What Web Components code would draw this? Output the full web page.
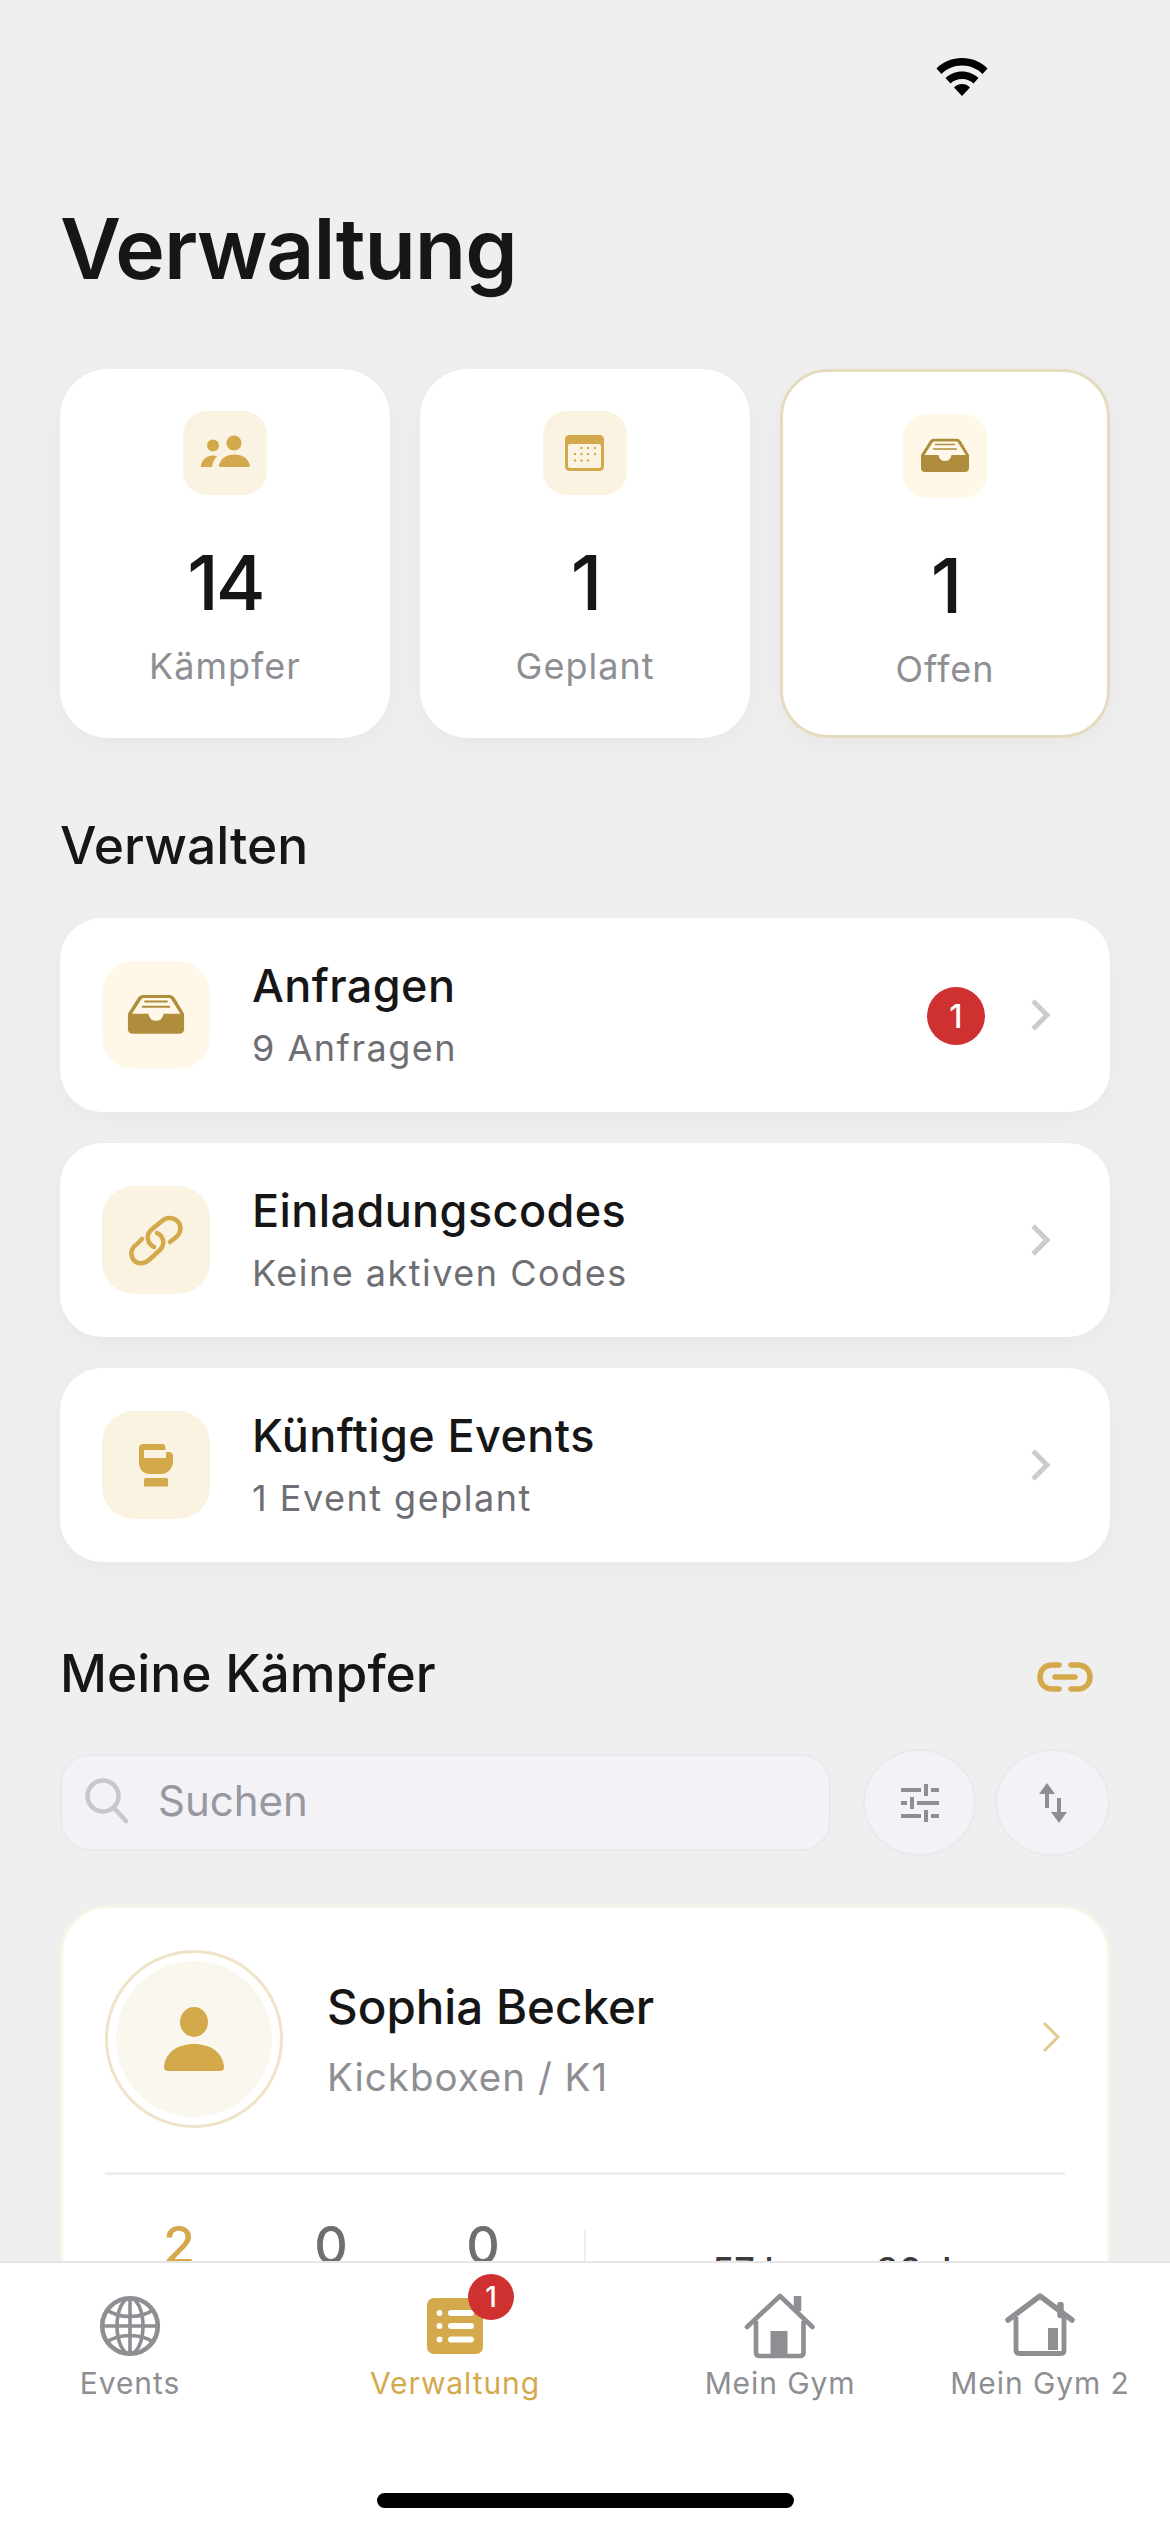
<!DOCTYPE html>
<html lang="de">
<head>
<meta charset="utf-8">
<title>Verwaltung</title>
<style>
    html, body { margin: 0; padding: 0; background: #efefef; }
    body { width: 1170px; height: 2532px; overflow: hidden; font-family: "Inter", "Liberation Sans", sans-serif; }
</style>
</head>
<body>
<app-shell>
    <status-top></status-top>
    <page-title>Verwaltung</page-title>
    <stat-row>
        <stat-card icon="people" value="14" label="Kämpfer"></stat-card>
        <stat-card icon="calendar" value="1" label="Geplant"></stat-card>
        <stat-card icon="inbox" value="1" label="Offen" highlighted></stat-card>
    </stat-row>
    <section-head>Verwalten</section-head>
    <manage-row icon="inbox" soft title="Anfragen" subtitle="9 Anfragen" badge="1"></manage-row>
    <manage-row icon="link" title="Einladungscodes" subtitle="Keine aktiven Codes"></manage-row>
    <manage-row icon="glove" title="Künftige Events" subtitle="1 Event geplant"></manage-row>
    <section-head linked>Meine Kämpfer</section-head>
    <search-bar placeholder="Suchen"></search-bar>
    <fighter-card name="Sophia Becker" discipline="Kickboxen / K1" wins="2" draws="0" losses="0" weight="57 kg" age="36 J"></fighter-card>
    <tab-bar slot="tabs">
        <tab-item icon="globe" label="Events"></tab-item>
        <tab-item icon="list" label="Verwaltung" active badge="1"></tab-item>
        <tab-item icon="house" label="Mein Gym"></tab-item>
        <tab-item icon="house2" label="Mein Gym 2"></tab-item>
    </tab-bar>
</app-shell>

<script>
const GOLD = '#d4a94c';
const DARK_GOLD = '#b08d3c';
const GREY = '#8e8e93';

const Icons = {
    people: `<svg width="84" height="84" viewBox="0 0 84 84" fill="${GOLD}">
        <circle cx="51" cy="32" r="7.6"/><circle cx="30" cy="34.5" r="6"/>
        <path d="M37 56c-1 0-1.400-.8-1.100-1.800C37.500 48 43 43.500 51.500 43.500S65.500 48 66.800 54.200c.2 1-.3 1.800-1.300 1.800z"/>
        <path d="M19 56c-1 0-1.300-.8-1-1.800C19.500 48 24 44.500 30 44.500c1.500 0 3 .2 4.200.7-2.400 2-4.500 5.500-5.200 10.800z"/>
    </svg>`,
    calendar: `<svg width="84" height="84" viewBox="0 0 84 84">
        <rect x="22" y="24" width="39" height="36" rx="4.500" fill="${GOLD}"/>
        <rect x="25" y="33" width="33" height="24" rx="2" fill="#fbf3e1"/>
        <g fill="${GOLD}">
            <circle cx="38.500" cy="37" r="1.200"/><circle cx="45" cy="37" r="1.200"/><circle cx="52" cy="37" r="1.200"/>
            <circle cx="32" cy="43" r="1.200"/><circle cx="38.500" cy="43" r="1.200"/><circle cx="45" cy="43" r="1.200"/><circle cx="52" cy="43" r="1.200"/>
            <circle cx="32" cy="49.500" r="1.200"/><circle cx="38.500" cy="49.500" r="1.200"/><circle cx="45" cy="49.500" r="1.200"/>
        </g>
    </svg>`,
    inbox: `<svg width="84" height="84" viewBox="0 0 84 84">
        <path d="M18 41 26.500 27.500C27.800 25.500 29 24.800 31 24.800H53.500C55.500 24.800 56.700 25.500 58 27.500L66 41V54C66 56.500 64.500 58 62 58H22C19.500 58 18 56.500 18 54Z" fill="${DARK_GOLD}"/>
        <path d="M21.500 41 29.200 29C29.800 28 30.500 27.500 31.500 27.500H53C54 27.500 54.700 28 55.300 29L62.800 41H48.500C47.800 45 45.500 47 42 47S36.200 45 35.500 41Z" fill="#fff8e8"/>
        <path d="M32 30.500H52M30 35H54" stroke="${DARK_GOLD}" stroke-width="1.600"/>
    </svg>`,
    link: `<svg width="108" height="108" viewBox="0 0 108 108" fill="none" stroke="${GOLD}" stroke-width="4.500" stroke-linecap="round">
        <path d="M52 61C46 58 43 50 49 44L60 35C66 30 74 32 77 37C80 42 78 49 73 52L68 56"/>
        <path d="M55 47C61 50 64 57 58 64L47 74C41 79 34 78 31 73C28 68 29 62 35 58L40 53"/>
    </svg>`,
    glove: `<svg width="108" height="108" viewBox="0 0 108 108">
        <path d="M41 33H60C62 33 63.500 34.500 63.500 36.500V41H67C69.500 41 71 42.500 71 45V50C71 57 66 63 59 63H48C41.500 63 37 58.500 37 52V37C37 34.500 38.500 33 41 33Z" fill="${GOLD}"/>
        <rect x="42" y="39" width="22" height="8" fill="#fbf3e1"/>
        <rect x="42" y="67" width="24" height="8.500" rx="1.500" fill="${GOLD}"/>
    </svg>`,
    globe: `<svg width="62" height="62" viewBox="0 0 62 62" fill="none" stroke="${GREY}" stroke-width="3.600">
        <circle cx="31" cy="31" r="27.800" stroke-width="4.600"/>
        <ellipse cx="31" cy="31" rx="13" ry="27.800"/>
        <path d="M31 3V59M3 31H59"/>
        <path d="M8 15C15 20 23 21.500 31 21.500S47 20 54 15"/>
        <path d="M8 47C15 42 23 40.500 31 40.500S47 42 54 47"/>
    </svg>`,
    list: `<svg width="56" height="56" viewBox="0 0 56 56">
        <rect width="56" height="56" rx="7" fill="${GOLD}"/>
        <g fill="#fff"><circle cx="12.500" cy="15" r="2.900"/><circle cx="12.500" cy="28" r="2.900"/><circle cx="12.500" cy="41.500" r="2.900"/>
        <rect x="21" y="12" width="26" height="6" rx="3"/><rect x="21" y="25" width="26" height="6" rx="3"/><rect x="21" y="38.500" width="26" height="6" rx="3"/></g>
    </svg>`,
    house: `<svg width="72" height="66" viewBox="0 0 72 66" fill="none" stroke="${GREY}">
        <path d="M3 34 36 3 68.500 34" stroke-width="4.600" stroke-linecap="round" stroke-linejoin="round"/>
        <path d="M53.500 18V3" stroke-width="7.500"/>
        <path d="M12 28V59.500C12 62 13 63 15.500 63H56C58.500 63 59.500 62 59.500 59.500V28" stroke-width="4.600"/>
        <rect x="26.500" y="38" width="17" height="25" fill="${GREY}" stroke="none"/>
    </svg>`,
    house2: `<svg width="70" height="66" viewBox="0 0 70 66" fill="none" stroke="${GREY}">
        <path d="M3 27 35 3 67 27" stroke-width="5.500" stroke-linecap="round" stroke-linejoin="round"/>
        <path d="M55.500 12V22" stroke-width="6.500" stroke-linecap="round"/>
        <path d="M11 24V57C11 59.500 12 60.500 14.500 60.500H56C58 60.500 59 59.500 59 57V24" stroke-width="4.800"/>
        <rect x="43" y="35" width="10" height="22" fill="${GREY}" stroke="none"/>
    </svg>`
};

const chevron = (color, width) => `<svg width="22" height="34" viewBox="0 0 22 34" fill="none" stroke="${color}" stroke-width="${width}"><path d="M3 3 17 17 3 31"/></svg>`;

class AppShell extends HTMLElement {
    constructor() {
        super();
        this.attachShadow({ mode: 'open' });
        this.shadowRoot.innerHTML = `
            <style>
                :host { display: flex; flex-direction: column; width: 1170px; height: 2532px; }
                .scroll { flex: 1; min-height: 0; overflow: hidden; padding: 0 60px; display: flex; flex-direction: column; }
            </style>
            <div class="scroll"><slot></slot></div>
            <slot name="tabs"></slot>
        `;
    }
}

class StatusTop extends HTMLElement {
    constructor() {
        super();
        this.attachShadow({ mode: 'open' });
        this.shadowRoot.innerHTML = `
            <style>
                :host { display: flex; justify-content: flex-end; flex-shrink: 0; height: 100px; padding: 58px 122px 0 0; box-sizing: border-box; }
                svg { display: block; }
            </style>
            <svg width="52" height="38" viewBox="0 0 52 38" fill="#000">
                <path d="M26 0C36 0 45 3.800 51.500 10.500L46.500 16C41 10.500 34 7.500 26 7.500S11 10.500 5.500 16L.5 10.500C7 3.800 16 0 26 0Z"/>
                <path d="M26 13.500C32.500 13.500 38 16 42.500 20L37.500 25.500C34.500 22.500 30.500 21 26 21S17.500 22.500 14.500 25.500L9.500 20C14 16 19.500 13.500 26 13.500Z"/>
                <path d="M26 26C29 26 31.800 27 34 29.500L26 38 18 29.500C20.200 27 23 26 26 26Z"/>
            </svg>
        `;
    }
}

class PageTitle extends HTMLElement {
    constructor() {
        super();
        this.attachShadow({ mode: 'open' });
        this.shadowRoot.innerHTML = `
            <style>
                :host { display: block; flex-shrink: 0; margin: 91px 0 62px; font-size: 84px; line-height: 116px; font-weight: 600; color: #161616; letter-spacing: -1px; }
            </style>
            <slot></slot>
        `;
    }
}

class StatRow extends HTMLElement {
    constructor() {
        super();
        this.attachShadow({ mode: 'open' });
        this.shadowRoot.innerHTML = `
            <style>
                :host { display: grid; flex-shrink: 0; grid-template-columns: repeat(3, 1fr); gap: 30px; }
            </style>
            <slot></slot>
        `;
    }
}

class StatCard extends HTMLElement {
    constructor() {
        super();
        this.attachShadow({ mode: 'open' });
    }

    connectedCallback() {
        const highlighted = this.hasAttribute('highlighted');
        this.shadowRoot.innerHTML = `
            <style>
                :host { display: flex; flex-direction: column; align-items: center; box-sizing: border-box; height: 369px; padding-top: 42px; background: #fff; border-radius: 48px; box-shadow: 0 8px 28px rgba(0,0,0,.035); ${highlighted ? 'border: 3px solid #e5dcc0;' : ''} }
                .tile { width: 84px; height: 84px; border-radius: 24px; background: ${highlighted ? '#fff8e8' : '#fbf3e1'}; }
                .tile svg { display: block; }
                .value { margin-top: 41px; font-size: 76px; line-height: 92px; font-weight: 500; color: #161616; letter-spacing: -3px; }
                .label { margin-top: 16px; font-size: 36px; line-height: 44px; color: ${GREY}; letter-spacing: 1px; }
            </style>
            <div class="tile">${Icons[this.getAttribute('icon')]}</div>
            <div class="value">${this.getAttribute('value')}</div>
            <div class="label">${this.getAttribute('label')}</div>
        `;
    }
}

class SectionHead extends HTMLElement {
    constructor() {
        super();
        this.attachShadow({ mode: 'open' });
    }

    connectedCallback() {
        const linked = this.hasAttribute('linked');
        this.shadowRoot.innerHTML = `
            <style>
                :host { display: flex; flex-shrink: 0; justify-content: space-between; align-items: center; font-size: 51.500px; line-height: 64px; font-weight: 500; color: #161616; margin: ${linked ? '48px 0 0' : '75px 0 41px'}; }
                svg { margin: 8px 17px 0 0; display: block; }
            </style>
            <slot></slot>
            ${linked ? `<svg width="56" height="30" viewBox="0 0 56 30" fill="none" stroke="${GOLD}" stroke-width="5.500" stroke-linecap="round">
                <path d="M22 3H15C8 3 3 8 3 15S8 27 15 27H22"/>
                <path d="M34 3H41C48 3 53 8 53 15S48 27 41 27H34"/>
                <path d="M18 15H38"/>
            </svg>` : ''}
        `;
    }
}

class ManageRow extends HTMLElement {
    constructor() {
        super();
        this.attachShadow({ mode: 'open' });
    }

    connectedCallback() {
        const badge = this.getAttribute('badge');
        this.shadowRoot.innerHTML = `
            <style>
                :host { display: flex; flex-shrink: 0; align-items: center; box-sizing: border-box; height: 194px; padding: 0 58px 0 42px; margin-bottom: 31px; background: #fff; border-radius: 42px; box-shadow: 0 6px 22px rgba(0,0,0,.035); }
                .tile { width: 108px; height: 108px; flex-shrink: 0; border-radius: 32px; background: ${this.hasAttribute('soft') ? '#fff8e8' : '#fbf3e1'}; display: flex; align-items: center; justify-content: center; }
                .tile svg { display: block; }
                .tile .scaled { transform: scale(1.17); }
                .text { flex: 1; margin-left: 42px; }
                .title { font-size: 45px; line-height: 54px; font-weight: 500; color: #161616; letter-spacing: .4px; }
                .sub { margin-top: 12px; font-size: 36px; line-height: 46px; color: #6e6e73; letter-spacing: 1.5px; }
                .badge { width: 58px; height: 58px; border-radius: 50%; background: #cf3030; color: #fff; font-size: 32px; font-weight: 500; display: flex; align-items: center; justify-content: center; margin: 2px 45px 0 0; }
                .chev { display: block; margin-top: 3px; }
            </style>
            <div class="tile"><span class="${this.getAttribute('icon') === 'inbox' ? 'scaled' : ''}">${Icons[this.getAttribute('icon')]}</span></div>
            <div class="text">
                <div class="title">${this.getAttribute('title')}</div>
                <div class="sub">${this.getAttribute('subtitle')}</div>
            </div>
            ${badge ? `<div class="badge">${badge}</div>` : ''}
            <span class="chev">${chevron('#cccccc', 5)}</span>
        `;
    }
}

class SearchBar extends HTMLElement {
    constructor() {
        super();
        this.attachShadow({ mode: 'open' });
    }

    connectedCallback() {
        this.shadowRoot.innerHTML = `
            <style>
                :host { display: flex; flex-shrink: 0; align-items: center; gap: 32px; margin-top: 44px; }
                .field { flex: 1; height: 97px; box-sizing: border-box; display: flex; align-items: center; padding: 0 0 4px 23px; background: #f2f2f7; border: 2px solid #e9e9ee; border-radius: 30px; font-size: 42px; color: #98989e; }
                .field svg { display: block; margin-right: 29px; }
                .round { width: 113px; height: 107px; box-sizing: border-box; border-radius: 50%; background: #f2f2f7; border: 2px solid #e9e9ee; display: flex; align-items: center; justify-content: center; flex-shrink: 0; }
                .round + .round { margin-left: -13px; width: 115px; }
            </style>
            <div class="field">
                <svg width="44" height="46" viewBox="0 0 44 46" fill="none" stroke="#c7c7cc" stroke-width="4.500" stroke-linecap="round"><circle cx="18" cy="18" r="15.500"/><path d="M29 30 41 43"/></svg>
                ${this.getAttribute('placeholder')}
            </div>
            <div class="round">
                <svg width="38" height="38" viewBox="0 0 38 38" fill="none" stroke="${GREY}" stroke-width="4">
                    <path d="M0 6H20M30 6H38M25 0V12M0 19H6M16 19H38M11 13V25M0 32H20M30 32H38M25 26V38"/>
                </svg>
            </div>
            <div class="round">
                <svg width="30" height="40" viewBox="0 0 30 40" fill="${GREY}">
                    <path d="M9 0 17 11H11V25H7V11H1Z"/>
                    <path d="M21 40 13 29H19V15H23V29H29Z"/>
                </svg>
            </div>
        `;
    }
}

class FighterCard extends HTMLElement {
    constructor() {
        super();
        this.attachShadow({ mode: 'open' });
    }

    connectedCallback() {
        const attr = name => this.getAttribute(name);
        this.shadowRoot.innerHTML = `
            <style>
                :host { display: block; flex-shrink: 0; box-sizing: border-box; margin-top: 49px; padding: 42px 42px 40px; background: #fff; border: 3px solid #f8f4e8; border-radius: 48px; }
                .head { display: flex; align-items: center; }
                .avatar { width: 178px; height: 178px; box-sizing: border-box; flex-shrink: 0; border-radius: 50%; border: 3px solid #efe3c8; padding: 8px; }
                .avatar div { width: 100%; height: 100%; border-radius: 50%; background: #faf7ee; display: flex; align-items: center; justify-content: center; }
                .who { flex: 1; margin-left: 44px; }
                .name { font-size: 47.500px; line-height: 60px; font-weight: 500; color: #161616; }
                .disc { margin-top: 15px; font-size: 38.500px; line-height: 50px; color: ${GREY}; letter-spacing: 1px; }
                .chev { margin-right: 2px; display: block; }
                hr { border: 0; height: 3px; background: #eeeeee; margin: 44px 0 0; }
                .stats { display: flex; align-items: flex-start; margin: 39px 0 0 -2px; }
                .num { width: 152px; text-align: center; font-size: 52px; line-height: 64px; font-weight: 500; color: #6e6e73; }
                .num.win { color: ${GOLD}; }
                .sep { width: 2px; height: 120px; background: #eeeeee; margin: 16px 0 0 25px; }
                .facts { display: flex; gap: 70px; margin: 33px 0 0 126px; font-size: 36px; line-height: 46px; font-weight: 500; color: #3a3a3c; }
            </style>
            <div class="head">
                <div class="avatar"><div>
                    <svg width="60" height="64" viewBox="0 0 60 64" fill="${GOLD}"><ellipse cx="30" cy="15" rx="14" ry="15"/><path d="M4 64C1 64 0 62.500 0 60 1 46 13 37 30 37S59 46 60 60C60 62.500 59 64 56 64Z"/></svg>
                </div></div>
                <div class="who">
                    <div class="name">${attr('name')}</div>
                    <div class="disc">${attr('discipline')}</div>
                </div>
                <span class="chev">${chevron('#e3c98f', 3)}</span>
            </div>
            <hr>
            <div class="stats">
                <div class="num win">${attr('wins')}</div>
                <div class="num">${attr('draws')}</div>
                <div class="num">${attr('losses')}</div>
                <div class="sep"></div>
                <div class="facts"><span>${attr('weight')}</span><span>${attr('age')}</span></div>
            </div>
        `;
    }
}

class TabBar extends HTMLElement {
    constructor() {
        super();
        this.attachShadow({ mode: 'open' });
        this.shadowRoot.innerHTML = `
            <style>
                :host { display: flex; flex-direction: column; flex-shrink: 0; height: 271px; box-sizing: border-box; background: #fff; border-top: 2px solid #e6e6e6; }
                .tabs { display: grid; grid-template-columns: 260px 390px 260px 260px; padding-top: 30px; }
                .home { width: 417px; height: 15px; border-radius: 8px; background: #000; margin: auto 0 24px 377px; }
            </style>
            <div class="tabs"><slot></slot></div>
            <div class="home"></div>
        `;
    }
}

class TabItem extends HTMLElement {
    constructor() {
        super();
        this.attachShadow({ mode: 'open' });
    }

    connectedCallback() {
        const active = this.hasAttribute('active');
        const badge = this.getAttribute('badge');
        this.shadowRoot.innerHTML = `
            <style>
                :host { display: flex; flex-direction: column; align-items: center; color: ${active ? GOLD : GREY}; }
                .icon { position: relative; height: 66px; display: flex; align-items: center; justify-content: center; }
                .icon svg { display: block; }
                .badge { position: absolute; top: -19px; left: 41px; width: 46px; height: 46px; border-radius: 50%; background: #cf3030; color: #fff; font-size: 28px; font-weight: 500; display: flex; align-items: center; justify-content: center; }
                .label { margin-top: 5px; font-size: 30px; line-height: 38px; letter-spacing: .9px; white-space: nowrap; }
            </style>
            <div class="icon">${Icons[this.getAttribute('icon')]}${badge ? `<span class="badge">${badge}</span>` : ''}</div>
            <div class="label">${this.getAttribute('label')}</div>
        `;
    }
}

customElements.define('app-shell', AppShell);
customElements.define('status-top', StatusTop);
customElements.define('page-title', PageTitle);
customElements.define('stat-row', StatRow);
customElements.define('stat-card', StatCard);
customElements.define('section-head', SectionHead);
customElements.define('manage-row', ManageRow);
customElements.define('search-bar', SearchBar);
customElements.define('fighter-card', FighterCard);
customElements.define('tab-bar', TabBar);
customElements.define('tab-item', TabItem);
</script>
</body>
</html>
